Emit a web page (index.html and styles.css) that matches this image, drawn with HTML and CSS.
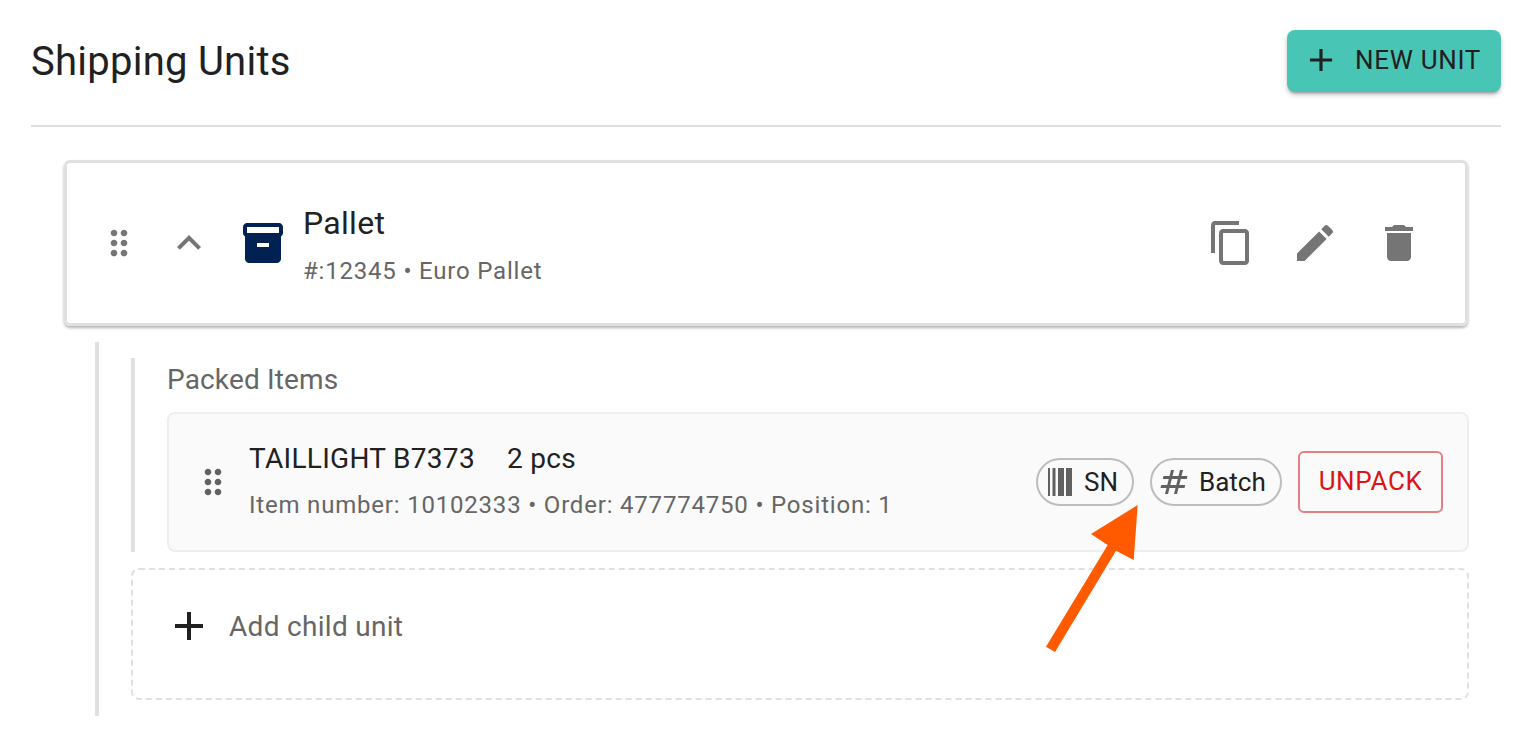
FILE: index.html
```html
<!DOCTYPE html>
<html lang="en">
<head>
    <meta charset="UTF-8">
    <meta name="viewport" content="width=device-width, initial-scale=1.0">
    <title>Shipping Units</title>
    <link rel="stylesheet" href="styles.css">
</head>
<body>
    <div class="page">
        <div class="header">
            <h1 class="title">Shipping Units</h1>
            <button type="button" class="newBtn">
                <svg class="newIcon" viewBox="0 0 24 24"><path d="M19 13h-6v6h-2v-6H5v-2h6V5h2v6h6v2z"/></svg>
                NEW UNIT
            </button>
        </div>

        <div class="unitCard">
            <svg class="drag" viewBox="0 0 24 24"><path d="M11 18c0 1.1-.9 2-2 2s-2-.9-2-2 .9-2 2-2 2 .9 2 2zm-2-8c-1.1 0-2 .9-2 2s.9 2 2 2 2-.9 2-2-.9-2-2-2zm0-6c-1.1 0-2 .9-2 2s.9 2 2 2 2-.9 2-2-.9-2-2-2zm6 4c1.1 0 2-.9 2-2s-.9-2-2-2-2 .9-2 2 .9 2 2 2zm0 2c-1.1 0-2 .9-2 2s.9 2 2 2 2-.9 2-2-.9-2-2-2zm0 6c-1.1 0-2 .9-2 2s.9 2 2 2 2-.9 2-2-.9-2-2-2z"/></svg>
            <svg class="icon chevron" viewBox="0 0 24 24"><path d="M12 8l-6 6 1.41 1.41L12 10.83l4.59 4.58L18 14z"/></svg>
            <svg class="icon box" viewBox="0 0 24 24"><path d="M20 2H4c-1 0-2 .9-2 2v3.01c0 .72.43 1.34 1 1.69V20c0 1.1 1.1 2 2 2h14c.9 0 2-.9 2-2V8.7c.57-.35 1-.97 1-1.69V4c0-1.1-1-2-2-2zm-5 12H9v-2h6v2zm5-7H4V4l16-.02V7z"/></svg>
            <div class="unitText">
                <div class="unitName">Pallet</div>
                <div class="unitSub">#:12345 • Euro Pallet</div>
            </div>
            <div class="unitActions">
                <svg class="icon" viewBox="0 0 24 24"><path d="M16 1H4c-1.1 0-2 .9-2 2v14h2V3h12V1zm3 4H8c-1.1 0-2 .9-2 2v14c0 1.1.9 2 2 2h11c1.1 0 2-.9 2-2V7c0-1.1-.9-2-2-2zm0 16H8V7h11v14z"/></svg>
                <svg class="icon" viewBox="0 0 24 24"><path d="M3 17.25V21h3.75L17.81 9.94l-3.75-3.75L3 17.25zM20.71 7.04c.39-.39.39-1.02 0-1.41l-2.34-2.34c-.39-.39-1.02-.39-1.41 0l-1.83 1.83 3.75 3.75 1.83-1.83z"/></svg>
                <svg class="icon" viewBox="0 0 24 24"><path d="M6 19c0 1.1.9 2 2 2h8c1.1 0 2-.9 2-2V7H6v12zM19 4h-3.5l-1-1h-5l-1 1H5v2h14V4z"/></svg>
            </div>
        </div>

        <div class="children">
            <div class="packed">
                <div class="packedLabel">Packed Items</div>
                <div class="itemCard">
                    <svg class="itemDrag" viewBox="0 0 24 24"><path d="M11 18c0 1.1-.9 2-2 2s-2-.9-2-2 .9-2 2-2 2 .9 2 2zm-2-8c-1.1 0-2 .9-2 2s.9 2 2 2 2-.9 2-2-.9-2-2-2zm0-6c-1.1 0-2 .9-2 2s.9 2 2 2 2-.9 2-2-.9-2-2-2zm6 4c1.1 0 2-.9 2-2s-.9-2-2-2-2 .9-2 2 .9 2 2 2zm0 2c-1.1 0-2 .9-2 2s.9 2 2 2 2-.9 2-2-.9-2-2-2zm0 6c-1.1 0-2 .9-2 2s.9 2 2 2 2-.9 2-2-.9-2-2-2z"/></svg>
                    <div class="itemText">
                        <div class="itemName"><span>TAILLIGHT B7373</span><span>2 pcs</span></div>
                        <div class="itemSub">Item number: 10102333 • Order: 477774750 • Position: 1</div>
                    </div>
                    <div class="chip chipSn">
                        <svg class="barcode" viewBox="0 0 24 28"><path d="M0 0h2v28H0zM4.5 0h3v28h-3zM10 0h6v28h-6zM18 0h6v28h-6z"/></svg>
                        SN
                    </div>
                    <div class="chip chipBatch">
                        <svg class="hash" viewBox="0 0 24 24"><path d="M20.5 10l.5-2h-4l1-4h-2l-1 4h-4l1-4h-2L9 8H5l-.5 2h4l-1 4h-4L3 16h4l-1 4h2l1-4h4l-1 4h2l1-4h4l.5-2h-4l1-4h4zm-7 4h-4l1-4h4l-1 4z"/></svg>
                        Batch
                    </div>
                    <button type="button" class="unpack">UNPACK</button>
                </div>
            </div>
            <div class="addChild">
                <svg class="addIcon" viewBox="0 0 24 24"><path d="M19 13h-6v6h-2v-6H5v-2h6V5h2v6h6v2z"/></svg>
                Add child unit
            </div>
        </div>
    </div>

    <!-- annotation arrow over the screenshot -->
    <svg class="arrow" viewBox="0 0 1530 730"><polygon points="1137.7,505 1091,534 1107.7,545 1046,646.7 1055,652 1116,550.7 1133.7,560"/></svg>
</body>
</html>
```

FILE: styles.css
```css
html, body{
    margin: 0;
    height: 730px;
    overflow: hidden;
    background-color: #fff;
}
body{
    position: relative;
    font-family: Roboto, "Liberation Sans", sans-serif;
    color: #212121;
}
.page{
    padding: 30px 29px 0 31px;
}
.header{
    display: flex;
    justify-content: space-between;
    align-items: center;
    height: 62px;
    padding-bottom: 33px;
    border-bottom: 2px solid #e0e0e0;
}
.title{
    margin: 2px 0 0;
    font-size: 40px;
    font-weight: 400;
    line-height: 62px;
    letter-spacing: 0.25px;
}
.newBtn{
    display: flex;
    align-items: center;
    width: 214px;
    height: 62px;
    padding: 0 0 2px 15px;
    border: 0;
    border-radius: 8px;
    background-color: #49c5b6;
    color: #212121;
    font-family: inherit;
    font-size: 26px;
    letter-spacing: 0.7px;
    box-shadow: 0 3px 3px -2px rgba(0,0,0,.3), 0 3px 5px rgba(0,0,0,.2);
}
.newIcon{
    width: 38px;
    height: 38px;
    margin-right: 15px;
    fill: #212121;
}
.unitCard{
    display: flex;
    align-items: center;
    box-sizing: border-box;
    height: 166px;
    margin: 33px 33px 0;
    padding: 0 24px 0 32px;
    border: 3px solid #e0e0e0;
    border-radius: 6px;
    box-shadow: 0 2px 3px rgba(0,0,0,.3);
}
.drag{
    width: 40px;
    height: 40px;
    fill: #757575;
}
.icon{
    width: 48px;
    height: 48px;
    fill: #757575;
}
.chevron{
    margin-left: 26px;
}
.box{
    margin-left: 26px;
    fill: #002152;
}
.unitText{
    margin: 2px 0 0 16px;
    flex: 1;
}
.unitName{
    font-size: 32px;
    line-height: 42px;
    letter-spacing: 0.3px;
}
.unitSub{
    margin-top: 11px;
    font-size: 24px;
    line-height: 32px;
    letter-spacing: 0.8px;
    color: #666;
}
.unitActions{
    display: flex;
    gap: 36px;
    padding-right: 18px;
}
.children{
    margin: 16px 32px 0 64px;
    padding: 16px 0 16px 32px;
    border-left: 4px solid #e0e0e0;
}
.packed{
    padding-left: 32px;
    border-left: 4px solid #e0e0e0;
}
.packedLabel{
    height: 54px;
    font-size: 28px;
    line-height: 44px;
    letter-spacing: 0.15px;
    color: #666;
}
.itemCard{
    display: flex;
    align-items: center;
    box-sizing: border-box;
    height: 140px;
    padding: 0 24px 0 24px;
    border: 2px solid #eee;
    border-radius: 8px;
    background-color: #fafafa;
}
.itemDrag{
    width: 40px;
    height: 40px;
    fill: #616161;
}
.itemText{
    flex: 1;
    margin-left: 16px;
}
.itemName{
    display: flex;
    gap: 32px;
    margin-top: -2px;
    font-size: 28px;
    line-height: 34px;
    letter-spacing: 0.3px;
}
.itemSub{
    margin-top: 13px;
    font-size: 24px;
    line-height: 32px;
    letter-spacing: 0.8px;
    color: #666;
}
.chip{
    display: flex;
    align-items: center;
    box-sizing: border-box;
    height: 48px;
    border: 2px solid #bdbdbd;
    border-radius: 24px;
    font-size: 26px;
}
.chipSn{
    width: 98px;
    padding-left: 10px;
}
.chipBatch{
    width: 132px;
    margin-left: 16px;
    padding-left: 4px;
}
.barcode{
    width: 24px;
    height: 28px;
    margin-right: 12px;
    fill: #616161;
}
.hash{
    width: 36px;
    height: 36px;
    margin-right: 7px;
    fill: #616161;
}
.unpack{
    box-sizing: border-box;
    width: 145px;
    height: 62px;
    margin-left: 16px;
    padding: 0 0 2px;
    border: 2px solid #e57f84;
    border-radius: 6px;
    background: transparent;
    color: #dc1414;
    font-family: inherit;
    font-size: 26px;
    letter-spacing: 0.6px;
}
.addChild{
    display: flex;
    align-items: center;
    box-sizing: border-box;
    height: 132px;
    margin-top: 16px;
    padding: 0 0 16px 32px;
    border: 2px dashed #e0e0e0;
    border-radius: 8px;
    font-size: 28px;
    letter-spacing: 0.3px;
    color: #666;
}
.addIcon{
    width: 48px;
    height: 48px;
    margin-right: 16px;
    fill: #212121;
}
.arrow{
    position: absolute;
    left: 0;
    top: 0;
    width: 1530px;
    height: 730px;
    fill: #ff5a00;
}
```
